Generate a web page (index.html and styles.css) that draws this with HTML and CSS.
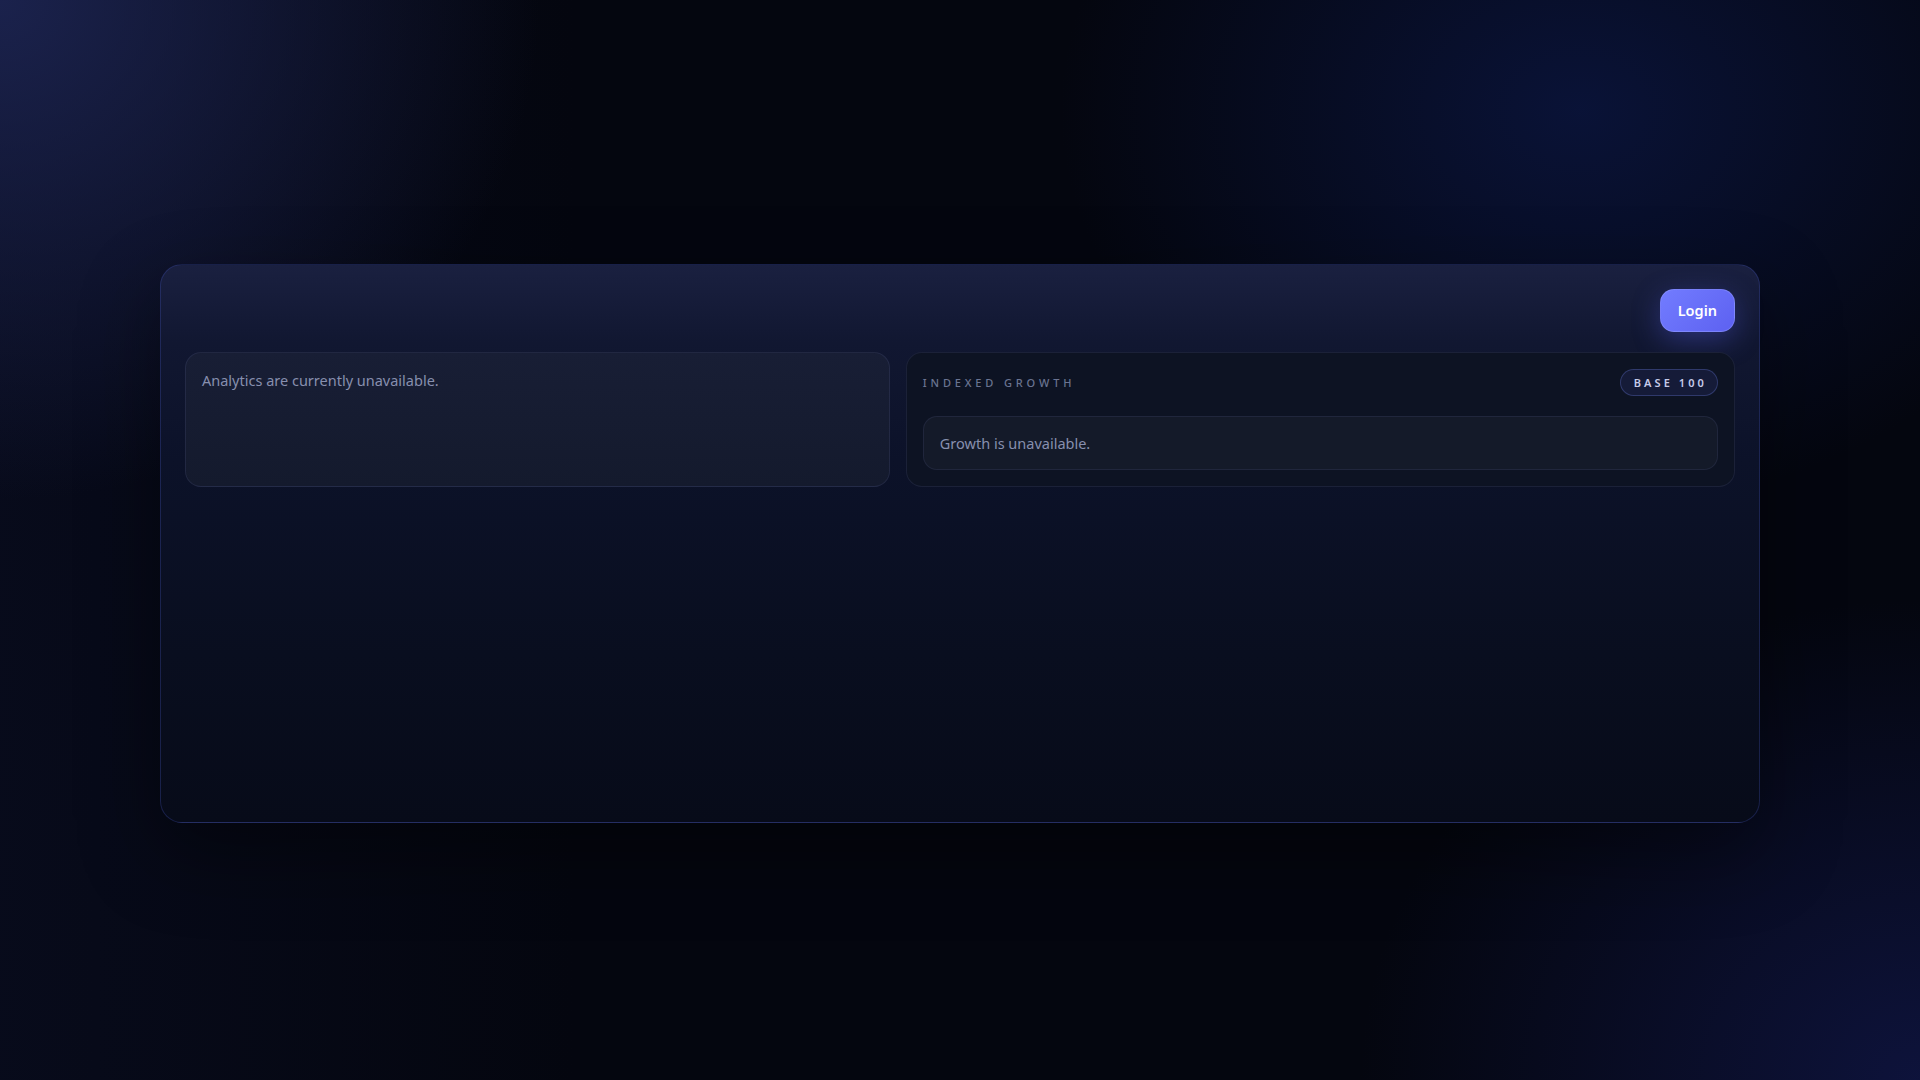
FILE: index.html
```html
<!DOCTYPE html>
<html lang="en">
<head>
<meta charset="utf-8">
<title>Analytics</title>
<link rel="stylesheet" href="styles.css">
</head>
<body>
<div class="page">
  <main class="shell">
    <header class="topbar">
      <button class="login" type="button">Login</button>
    </header>
    <section class="grid">
      <div class="panel panel-left">
        <p class="muted">Analytics are currently unavailable.</p>
      </div>
      <div class="panel panel-right">
        <div class="panel-head">
          <span class="eyebrow">Indexed Growth</span>
          <span class="badge">BASE 100</span>
        </div>
        <div class="empty">
          <p class="muted">Growth is unavailable.</p>
        </div>
      </div>
    </section>
  </main>
</div>
</body>
</html>
```

FILE: styles.css
```css
* { box-sizing: border-box; }

html, body {
  margin: 0;
  height: 100%;
}

body {
  font-family: "Noto Sans", "Open Sans", sans-serif;
  background-color: #04060f;
  background-image:
    radial-gradient(ellipse 540px 500px at 0px 0px, rgba(30, 38, 85, 0.85), rgba(30, 38, 85, 0) 100%),
    radial-gradient(ellipse 520px 400px at 1580px 110px, rgba(12, 24, 72, 0.7), rgba(12, 24, 72, 0) 100%),
    radial-gradient(ellipse 560px 480px at 1920px 1080px, rgba(16, 22, 70, 0.8), rgba(16, 22, 70, 0) 100%),
    linear-gradient(90deg, rgba(10, 14, 35, 0.6) 0%, rgba(4, 6, 15, 0) 30%);
  overflow: hidden;
}

.page {
  padding: 264px 160px 0;
}

.shell {
  width: 1600px;
  height: 559px;
  margin: 0 auto;
  padding: 24px 24px;
  border-radius: 22px;
  border: 1px solid rgba(60, 75, 170, 0.33);
  background: linear-gradient(180deg, #1a2040 0%, #111731 14%, #0c1229 35%, #090e1f 70%, #070b19 100%);
  box-shadow: 0 30px 80px rgba(0, 0, 0, 0.4);
}

.topbar {
  display: flex;
  justify-content: flex-end;
  margin-bottom: 20px;
}

.login {
  font-family: "Noto Sans", "Open Sans", sans-serif;
  font-size: 14.5px;
  font-weight: 600;
  line-height: 21px;
  color: #ffffff;
  padding: 10px 17px;
  border-radius: 14px;
  border: 1px solid rgba(160, 170, 255, 0.35);
  background: linear-gradient(135deg, #727cff 0%, #5d61f1 100%);
  box-shadow: 0 8px 28px rgba(90, 96, 240, 0.35);
  cursor: pointer;
}

.grid {
  display: grid;
  grid-template-columns: 0.85fr 1fr;
  gap: 16px;
}

.panel {
  border-radius: 16px;
  border: 1px solid rgba(120, 135, 200, 0.13);
  padding: 16px;
}

.panel-left {
  background: linear-gradient(180deg, #181e35 0%, #141a2d 100%);
}

.panel-right {
  background: #0d1323;
}

.muted {
  margin: 0;
  font-size: 14.5px;
  line-height: 22px;
  color: #878fae;
}

.panel-head {
  display: flex;
  align-items: center;
  justify-content: space-between;
  margin-bottom: 20px;
}

.eyebrow {
  font-size: 11px;
  font-weight: 500;
  letter-spacing: 0.35em;
  text-transform: uppercase;
  color: #6a7391;
}

.badge {
  font-size: 11px;
  font-weight: 600;
  letter-spacing: 0.28em;
  line-height: 15px;
  color: #c6cbea;
  padding: 5px 10px 5px 13px;
  border-radius: 999px;
  border: 1px solid rgba(80, 95, 170, 0.45);
  background: #151b38;
}

.empty {
  border-radius: 14px;
  border: 1px solid rgba(120, 135, 200, 0.12);
  background: #141a29;
  padding: 15px 16px;
}
```
